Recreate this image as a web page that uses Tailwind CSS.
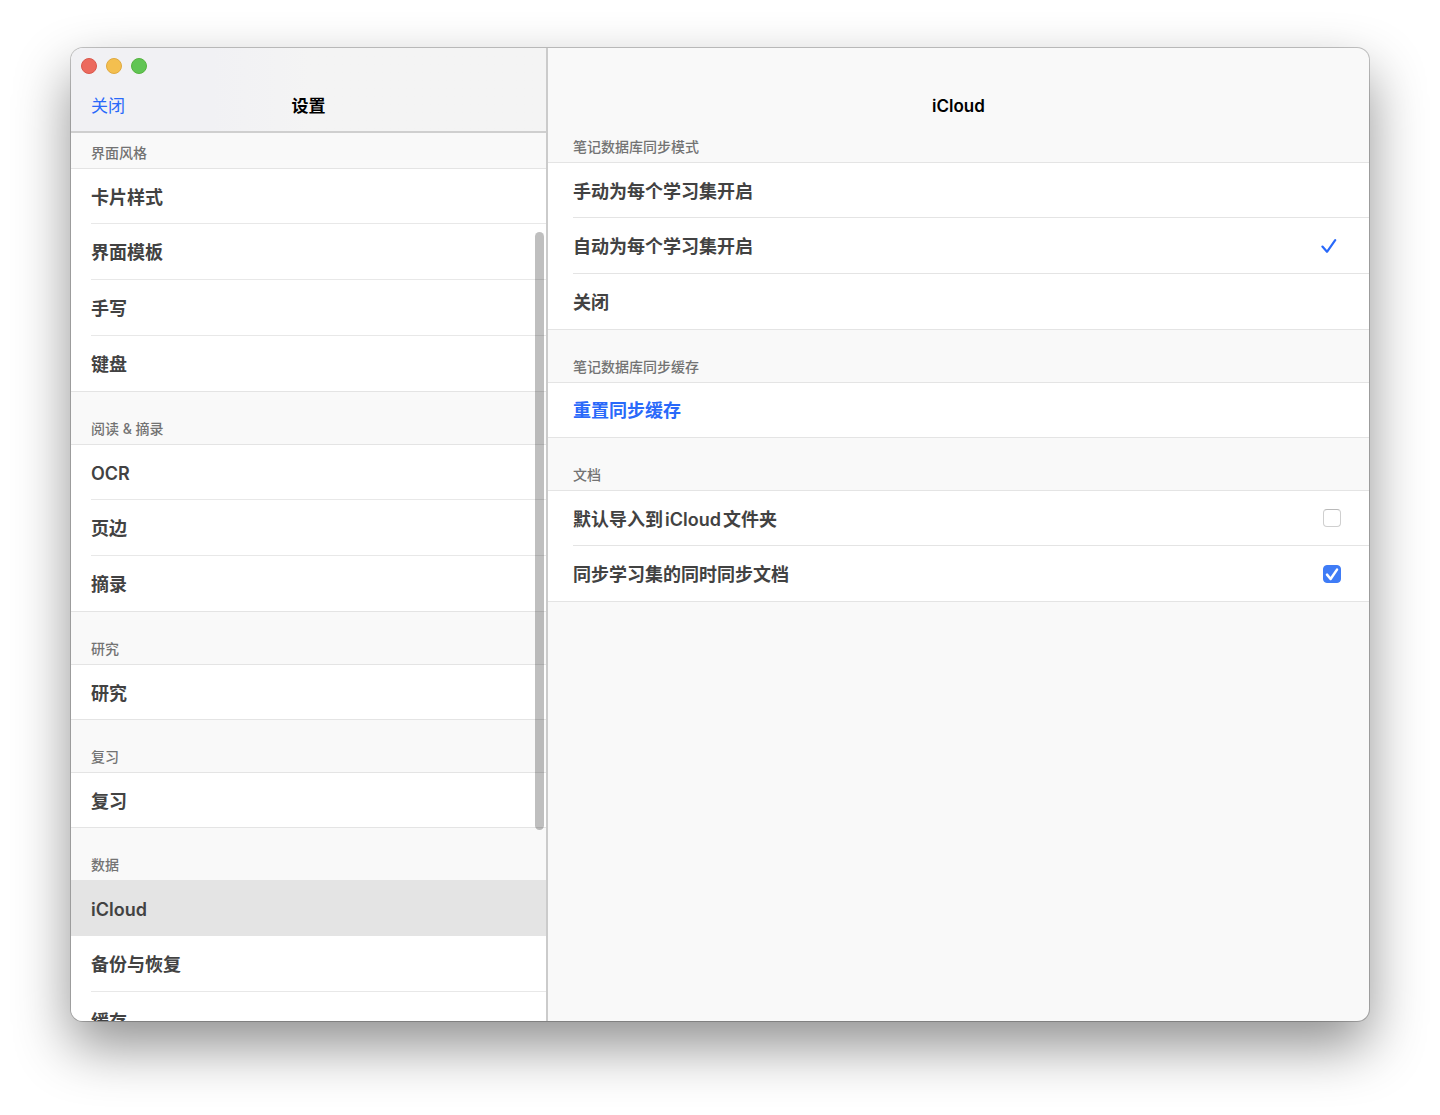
<!DOCTYPE html>
<html lang="zh-CN">
<head>
<meta charset="utf-8">
<meta name="viewport" content="width=device-width, initial-scale=1">
<title>设置</title>
<script src="https://cdn.jsdelivr.net/npm/@tailwindcss/browser@4"></script>
</head>
<body class="flex h-screen bg-white px-[71px] pt-12 pb-[94px] font-['Inter','Noto_Sans_CJK_SC',sans-serif] text-[#424242]">
<div class="flex min-w-0 flex-1 overflow-hidden rounded-xl bg-[#f9f9f9] shadow-[0_0_0_1px_rgba(0,0,0,0.22),0_25px_55px_rgba(0,0,0,0.44)]">

  <!-- Sidebar -->
  <aside class="relative flex w-[477px] shrink-0 flex-col border-r-2 border-[#cbcbcb]">
    <header class="h-[85px] shrink-0 border-b-2 border-[#cfcfcf] bg-linear-to-r from-[#f1f1f4] from-30% to-[#f4f4f4] to-50%">
      <div class="flex gap-[9px] px-[10px] pt-[10px]">
        <button type="button" aria-label="关闭窗口" class="size-4 rounded-full border border-[#d9584c] bg-[#ec6a5e]"></button>
        <button type="button" aria-label="最小化" class="size-4 rounded-full border border-[#dfa93f] bg-[#f4bf4f]"></button>
        <button type="button" aria-label="缩放" class="size-4 rounded-full border border-[#55b33f] bg-[#61c554]"></button>
      </div>
      <div class="grid grid-cols-3 items-center px-5 pt-5 text-[17px] leading-6">
        <button type="button" class="justify-self-start text-[#2969fa]">关闭</button>
        <h1 class="text-center font-semibold text-black">设置</h1>
      </div>
    </header>

    <nav class="min-h-0 flex-1 overflow-hidden text-lg font-semibold" aria-label="设置分类">
      <h2 class="flex h-9 items-end border-b border-[#e4e4e4] px-5 pb-[5px] text-sm leading-5 font-medium text-[#737373]">界面风格</h2>
      <ul class="border-b border-[#e4e4e4] bg-white pl-5 divide-y divide-[#e8e8e8]">
        <li><a href="#card" class="flex h-[54px] items-center pt-[3px]">卡片样式</a></li>
        <li><a href="#template" class="flex h-[55px] items-center pt-[3px]">界面模板</a></li>
        <li><a href="#handwriting" class="flex h-[55px] items-center pt-[3px]">手写</a></li>
        <li><a href="#keyboard" class="flex h-[55px] items-center pt-[3px]">键盘</a></li>
      </ul>

      <h2 class="flex h-[53px] items-end border-b border-[#e4e4e4] px-5 pb-[5px] text-sm leading-5 font-medium text-[#737373]">阅读 &amp; 摘录</h2>
      <ul class="border-b border-[#e4e4e4] bg-white pl-5 divide-y divide-[#e8e8e8]">
        <li><a href="#ocr" class="flex h-[54px] items-center pt-[3px]">OCR</a></li>
        <li><a href="#margin" class="flex h-[55px] items-center pt-[3px]">页边</a></li>
        <li><a href="#excerpt" class="flex h-[55px] items-center pt-[3px]">摘录</a></li>
      </ul>

      <h2 class="flex h-[53px] items-end border-b border-[#e4e4e4] px-5 pb-[5px] text-sm leading-5 font-medium text-[#737373]">研究</h2>
      <ul class="border-b border-[#e4e4e4] bg-white pl-5">
        <li><a href="#research" class="flex h-[54px] items-center pt-[3px]">研究</a></li>
      </ul>

      <h2 class="flex h-[53px] items-end border-b border-[#e4e4e4] px-5 pb-[5px] text-sm leading-5 font-medium text-[#737373]">复习</h2>
      <ul class="border-b border-[#e4e4e4] bg-white pl-5">
        <li><a href="#review" class="flex h-[54px] items-center pt-[3px]">复习</a></li>
      </ul>

      <h2 class="flex h-[53px] items-end border-b border-[#e4e4e4] px-5 pb-[5px] text-sm leading-5 font-medium text-[#737373]">数据</h2>
      <ul class="bg-white">
        <li><a href="#icloud" aria-current="page" class="flex h-[55px] items-center bg-[#e4e4e4] pt-0.5 pl-5">iCloud</a></li>
        <li class="pl-5"><a href="#backup" class="flex h-14 items-center border-b border-[#e8e8e8] pt-[3px]">备份与恢复</a></li>
        <li class="pl-5"><a href="#cache" class="flex h-14 items-center pt-[3px]">缓存</a></li>
      </ul>
    </nav>

    <!-- Overlay scroll thumb -->
    <div class="absolute top-[184px] right-[2px] h-[598px] w-[9px] rounded-full bg-black/25"></div>
  </aside>

  <!-- Detail pane -->
  <main class="min-w-0 flex-1 text-lg font-semibold">
    <h1 class="h-[79px] pt-[46px] text-center text-[17px] leading-6 font-semibold text-black">iCloud</h1>

    <h2 id="mode" class="flex h-9 items-end border-b border-[#e4e4e4] pl-[25px] pb-[5px] text-sm leading-5 font-medium text-[#737373]">笔记数据库同步模式</h2>
    <div role="radiogroup" aria-labelledby="mode" class="border-b border-[#e4e4e4] bg-white pl-[25px] divide-y divide-[#e4e4e4]">
      <label class="flex h-[55px] items-center pt-[3px] pr-8">
        <input type="radio" name="mode" class="peer sr-only"><span class="flex-1">手动为每个学习集开启</span>
        <svg class="invisible size-4 peer-checked:visible" viewBox="0 0 16 16" fill="none" stroke="#2969fa" stroke-width="2.2" stroke-linecap="round" stroke-linejoin="round"><path d="M1.4 7.6 6 12.8 14.2 1.2"/></svg>
      </label>
      <label class="flex h-14 items-center pt-0.5 pr-8">
        <input type="radio" name="mode" checked class="peer sr-only"><span class="flex-1">自动为每个学习集开启</span>
        <svg class="invisible size-4 peer-checked:visible" viewBox="0 0 16 16" fill="none" stroke="#2969fa" stroke-width="2.2" stroke-linecap="round" stroke-linejoin="round"><path d="M1.4 7.6 6 12.8 14.2 1.2"/></svg>
      </label>
      <label class="flex h-[55px] items-center pt-0.5 pr-8">
        <input type="radio" name="mode" class="peer sr-only"><span class="flex-1">关闭</span>
        <svg class="invisible size-4 peer-checked:visible" viewBox="0 0 16 16" fill="none" stroke="#2969fa" stroke-width="2.2" stroke-linecap="round" stroke-linejoin="round"><path d="M1.4 7.6 6 12.8 14.2 1.2"/></svg>
      </label>
    </div>

    <h2 class="flex h-[53px] items-end border-b border-[#e4e4e4] pl-[25px] pb-[5px] text-sm leading-5 font-medium text-[#737373]">笔记数据库同步缓存</h2>
    <div class="border-b border-[#e4e4e4] bg-white pl-[25px]">
      <button type="button" class="flex h-[54px] w-full items-center pt-0.5 text-[#2969fa]">重置同步缓存</button>
    </div>

    <h2 class="flex h-[53px] items-end border-b border-[#e4e4e4] pl-[25px] pb-[5px] text-sm leading-5 font-medium text-[#737373]">文档</h2>
    <div class="border-b border-[#e4e4e4] bg-white pl-[25px] divide-y divide-[#e4e4e4]">
      <div class="flex h-[55px] items-center pr-7">
        <label for="import" class="flex-1 pt-[3px]">默认导入到<span class="mx-0.5">iCloud</span>文件夹</label>
        <span class="grid">
          <input id="import" type="checkbox" class="peer col-start-1 row-start-1 size-[18px] appearance-none rounded-[4px] border border-[#cfcfcf] border-t-[#b9b9b9] bg-white checked:border-transparent checked:bg-[#3f7cf6]">
          <svg class="pointer-events-none invisible col-start-1 row-start-1 size-[18px] peer-checked:visible" viewBox="0 0 18 18" fill="none" stroke="#fff" stroke-width="2.5" stroke-linecap="round" stroke-linejoin="round"><path d="M4 9.6 7.6 14 14 4.6"/></svg>
        </span>
      </div>
      <div class="flex h-[55px] items-center pr-7">
        <label for="syncdocs" class="flex-1 pt-[3px]">同步学习集的同时同步文档</label>
        <span class="grid">
          <input id="syncdocs" type="checkbox" checked class="peer col-start-1 row-start-1 size-[18px] appearance-none rounded-[4px] border border-[#cfcfcf] bg-white checked:border-[#3f7cf6] checked:bg-[#3f7cf6]">
          <svg class="pointer-events-none invisible col-start-1 row-start-1 size-[18px] peer-checked:visible" viewBox="0 0 18 18" fill="none" stroke="#fff" stroke-width="2.5" stroke-linecap="round" stroke-linejoin="round"><path d="M4 9.6 7.6 14 14 4.6"/></svg>
        </span>
      </div>
    </div>
  </main>
</div>
</body>
</html>
